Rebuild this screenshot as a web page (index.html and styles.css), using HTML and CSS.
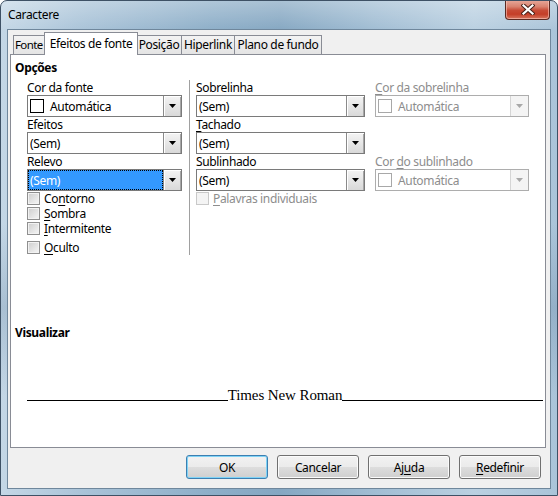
FILE: index.html
```html
<!DOCTYPE html>
<html lang="pt">
<head>
<meta charset="utf-8">
<title>Caractere</title>
<link rel="stylesheet" href="styles.css">
</head>
<body>
<div class="window">
  <div class="titlebar">
    <span class="title">Caractere</span>
    <div class="close">
      <svg width="14" height="11" viewBox="0 0 14 11">
        <path d="M2.5 1.5 L11.5 9.5 M11.5 1.5 L2.5 9.5" stroke="#4a2119" stroke-width="4.2" stroke-linecap="square" fill="none"/>
        <path d="M2.5 1.5 L11.5 9.5 M11.5 1.5 L2.5 9.5" stroke="#ffffff" stroke-width="2.2" stroke-linecap="square" fill="none"/>
      </svg>
    </div>
  </div>
  <div class="client">
    <div class="tabs">
      <div class="tab tab-fonte">Fonte</div>
      <div class="tab tab-efeitos active">Efeitos de fonte</div>
      <div class="tab tab-posicao">Posição</div>
      <div class="tab tab-hiperlink">Hiperlink</div>
      <div class="tab tab-plano">Plano de fundo</div>
    </div>
    <div class="panel">
      <div class="group-title">Opções</div>
      <div class="options">
        <div class="col col-a">
          <div class="label">Cor da fonte</div>
          <div class="combo">
            <div class="combo-field"><span class="swatch"></span>Automática</div>
            <div class="combo-btn"><svg width="7" height="4" viewBox="0 0 7 4"><polygon points="0,0 7,0 3.5,4" fill="#000"/></svg></div>
          </div>
          <div class="label">Efeitos</div>
          <div class="combo">
            <div class="combo-field">(Sem)</div>
            <div class="combo-btn"><svg width="7" height="4" viewBox="0 0 7 4"><polygon points="0,0 7,0 3.5,4" fill="#000"/></svg></div>
          </div>
          <div class="label">Relevo</div>
          <div class="combo">
            <div class="combo-field focus">(Sem)</div>
            <div class="combo-btn"><svg width="7" height="4" viewBox="0 0 7 4"><polygon points="0,0 7,0 3.5,4" fill="#000"/></svg></div>
          </div>
          <div class="check"><span class="box"></span><span>Co<u>n</u>torno</span></div>
          <div class="check"><span class="box"></span><span><u>S</u>ombra</span></div>
          <div class="check"><span class="box"></span><span><u>I</u>ntermitente</span></div>
          <div class="check check-gap"><span class="box"></span><span><u>O</u>culto</span></div>
        </div>
        <div class="sep"></div>
        <div class="col col-b">
          <div class="label">Sobrelinha</div>
          <div class="combo">
            <div class="combo-field">(Sem)</div>
            <div class="combo-btn"><svg width="7" height="4" viewBox="0 0 7 4"><polygon points="0,0 7,0 3.5,4" fill="#000"/></svg></div>
          </div>
          <div class="label"><u>T</u>achado</div>
          <div class="combo">
            <div class="combo-field">(Sem)</div>
            <div class="combo-btn"><svg width="7" height="4" viewBox="0 0 7 4"><polygon points="0,0 7,0 3.5,4" fill="#000"/></svg></div>
          </div>
          <div class="label">Sublinhado</div>
          <div class="combo">
            <div class="combo-field">(Sem)</div>
            <div class="combo-btn"><svg width="7" height="4" viewBox="0 0 7 4"><polygon points="0,0 7,0 3.5,4" fill="#000"/></svg></div>
          </div>
          <div class="check disabled"><span class="box"></span><span><u>P</u>alavras individuais</span></div>
        </div>
        <div class="col col-c">
          <div class="label disabled"><u>C</u>or da sobrelinha</div>
          <div class="combo disabled">
            <div class="combo-field"><span class="swatch"></span>Automática</div>
            <div class="combo-btn"><svg width="7" height="4" viewBox="0 0 7 4"><polygon points="0,0 7,0 3.5,4" fill="#a8a8a8"/></svg></div>
          </div>
          <div class="spacer"></div>
          <div class="label disabled">Cor <u>d</u>o sublinhado</div>
          <div class="combo disabled">
            <div class="combo-field"><span class="swatch"></span>Automática</div>
            <div class="combo-btn"><svg width="7" height="4" viewBox="0 0 7 4"><polygon points="0,0 7,0 3.5,4" fill="#a8a8a8"/></svg></div>
          </div>
        </div>
      </div>
      <div class="group-title preview-title">Visualizar</div>
      <div class="preview">
        <span class="preview-line"></span>
        <span class="preview-text">Times New Roman</span>
        <span class="preview-line"></span>
      </div>
    </div>
    <div class="buttons">
      <div class="btn default">OK</div>
      <div class="btn">Cancelar</div>
      <div class="btn">Aj<u>u</u>da</div>
      <div class="btn"><u>R</u>edefinir</div>
    </div>
  </div>
</div>
</body>
</html>
```
FILE: styles.css
```css
* { box-sizing: border-box; }

body {
  margin: 0;
  background: #ffffff;
  font-family: "Noto Sans", "Open Sans", sans-serif;
  font-size: 12px;
  letter-spacing: -0.35px;
  color: #000;
}

u { text-decoration: underline; text-underline-offset: 2px; }

.window {
  width: 558px;
  height: 496px;
  border: 1px solid #3e5165;
  border-radius: 7px 7px 0 0;
  display: flex;
  flex-direction: column;
  overflow: hidden;
  background:
    linear-gradient(to bottom, rgba(255,255,255,0.3), rgba(255,255,255,0) 30px),
    linear-gradient(to bottom, rgba(0,0,0,0) 45%, rgba(30,70,110,0.16) 62%, rgba(0,0,0,0) 80%),
    linear-gradient(to right, #c4d7e6 0%, #a9c3d8 15%, #8daec8 38%, #85a7c2 50%, #a2bed4 68%, #bad0e1 85%, #aac4d9 100%);
}

.titlebar {
  height: 28px;
  flex: none;
  display: flex;
  align-items: flex-start;
  padding-left: 7px;
}

.title {
  line-height: 28px;
  color: #000;
}

.close {
  margin-left: auto;
  margin-right: 7px;
  margin-top: -1px;
  width: 45px;
  height: 20px;
  border: 1px solid #5b2a22;
  border-top: none;
  border-radius: 0 0 4px 4px;
  background: linear-gradient(to bottom, #e8aa9c 0%, #d9826f 35%, #c74a35 55%, #c43e28 75%, #d7765f 100%);
  box-shadow: inset 0 0 0 1px rgba(255,210,200,0.55);
  display: flex;
  align-items: center;
  justify-content: center;
}

.client {
  flex: 1;
  margin: 0 6px 6px;
  border: 1px solid #6f879c;
  background: #f0f0f0;
  display: flex;
  flex-direction: column;
  padding-top: 2px;
}

.tabs {
  display: flex;
  align-items: flex-end;
  height: 22px;
  margin-left: 5px;
  position: relative;
  z-index: 1;
}

.tab {
  flex: none;
  height: 19px;
  line-height: 18px;
  text-align: center;
  white-space: nowrap;
  border: 1px solid #898c95;
  border-bottom: none;
  margin-right: -1px;
  background: linear-gradient(to bottom, #f3f3f3, #e4e4e4);
}

.tab-fonte {
  width: 33px;
  text-align: left;
  padding-left: 1px;
  font-size: 11.5px;
  letter-spacing: -0.6px;
}
.tab-posicao { width: 46px; }
.tab-hiperlink { width: 54px; }
.tab-plano { width: 88px; }

.tab.active {
  width: 94px;
  height: 23px;
  line-height: 21px;
  margin: 0 -2px -1px -1px;
  background: #ffffff;
  position: relative;
  z-index: 2;
}

.panel {
  margin: 0 4px 0 2px;
  height: 394px;
  flex: none;
  border: 1px solid #898c95;
  background: #ffffff;
  padding: 5px 0 0 4px;
}

.group-title {
  font-weight: bold;
  line-height: 15px;
  height: 15px;
}

.options {
  display: flex;
  margin-top: 5px;
  padding-left: 12px;
  padding-bottom: 3px;
}

.col { display: flex; flex-direction: column; }
.col-a { width: 155px; }
.col-b { width: 169px; margin-right: 10px; }
.col-c { width: 154px; }

.sep {
  width: 1px;
  background: #a0a0a0;
  margin: 0 6px 0 7px;
}

.label {
  height: 15px;
  line-height: 15px;
  white-space: nowrap;
}

.disabled { color: #8d8d8d; }

.spacer { height: 37px; }

.combo {
  height: 22px;
  display: flex;
  border: 1px solid #7a7a7a;
  background: #ffffff;
}

.combo-field {
  flex: 1;
  display: flex;
  align-items: center;
  padding-left: 2px;
  white-space: nowrap;
}

.combo-field.focus {
  background: #3399ff;
  color: #ffffff;
  border: 1px dotted #000;
  padding-left: 1px;
}

.swatch {
  width: 14px;
  height: 14px;
  border: 1px solid #000;
  margin-right: 6px;
  background: #fff;
}

.combo-btn {
  width: 18px;
  border-left: 1px solid #8a8a8a;
  background: linear-gradient(to bottom, #f4f4f4, #d9d9d9);
  box-shadow: inset 1px 1px 0 #ffffff, inset -1px 0 0 #a6a6a6;
  display: flex;
  align-items: center;
  justify-content: center;
}

.combo.disabled {
  border-color: #adadad;
}

.combo.disabled .swatch { border-color: #a8a8a8; }

.combo.disabled .combo-btn {
  border-left-color: #d5d5d5;
  background: #f4f4f4;
  box-shadow: none;
}

.check {
  display: flex;
  align-items: center;
  gap: 4px;
  height: 15px;
  line-height: 14px;
  white-space: nowrap;
}

.check-gap { margin-top: 4px; }

.box {
  width: 13px;
  height: 13px;
  flex: none;
  border: 1px solid #8f8f8f;
  background: linear-gradient(135deg, #cdcdcd, #f6f6f6);
  box-shadow: inset 0 0 0 1px #f2f2f2;
}

.check.disabled .box {
  border-color: #c9c9c9;
  background: #f4f4f4;
  box-shadow: none;
}

.preview-title { margin-top: 67px; }

.preview {
  display: flex;
  align-items: flex-end;
  margin: 46px 2px 0 12px;
}

.preview-line {
  flex: 1;
  height: 1px;
  background: #000;
  margin-bottom: 3px;
}

.preview-text {
  font-family: "Liberation Serif", "Times New Roman", serif;
  font-size: 15px;
  line-height: 18px;
  letter-spacing: -0.1px;
  white-space: nowrap;
}

.buttons {
  display: flex;
  justify-content: flex-end;
  gap: 9px;
  padding: 7px 9px 9px 0;
}

.btn {
  width: 82px;
  height: 24px;
  border: 1px solid #707070;
  border-radius: 3px;
  background: linear-gradient(to bottom, #f2f2f2 0%, #ebebeb 50%, #dddddd 51%, #cfcfcf 100%);
  box-shadow: inset 0 0 0 1px #fbfbfb;
  display: flex;
  align-items: center;
  justify-content: center;
}

.btn.default {
  border-color: #3c7fb1;
  box-shadow: inset 0 0 0 1px #7fd3f6;
}
```
